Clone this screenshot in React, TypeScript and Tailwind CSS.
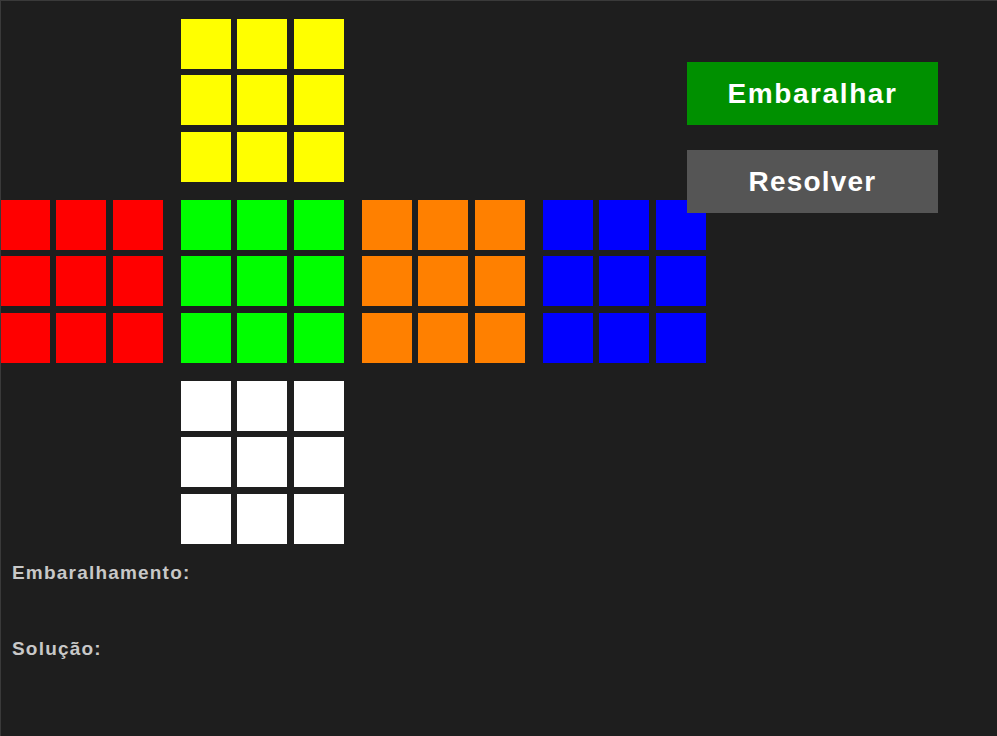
import React from "react";

const faces: { color: string; pos: string }[] = [
  { color: "bg-[#ffff00]", pos: "col-start-2 row-start-1" },
  { color: "bg-[#ff0000]", pos: "col-start-1 row-start-2" },
  { color: "bg-[#00ff00]", pos: "col-start-2 row-start-2" },
  { color: "bg-[#ff8000]", pos: "col-start-3 row-start-2" },
  { color: "bg-[#0000ff]", pos: "col-start-4 row-start-2" },
  { color: "bg-[#ffffff]", pos: "col-start-2 row-start-3" },
];

function Face({ color, pos }: { color: string; pos: string }) {
  return (
    <div className={`grid grid-cols-[repeat(3,50px)] grid-rows-[repeat(3,50px)] gap-[6.3px] ${pos}`}>
      {Array.from({ length: 9 }).map((_, i) => (
        <div key={i} className={color} />
      ))}
    </div>
  );
}

export default function App() {
  return (
    <div
      className="relative w-[997px] h-[736px] overflow-hidden bg-[#1e1e1e] border-t border-l border-[#3a3a3a]"
      style={{ fontFamily: '"Liberation Sans", Arial, sans-serif' }}
    >
      {/* Cube net */}
      <div className="grid grid-cols-[repeat(4,163px)] grid-rows-[repeat(3,163px)] gap-[18px] pt-[18px] -ml-px">
        {faces.map((f, i) => (
          <Face key={i} color={f.color} pos={f.pos} />
        ))}
      </div>

      {/* Move lists */}
      <div className="flex flex-col pl-[11px] pt-[19px] text-[19px] font-bold tracking-[1.2px] text-[#c8c8c8] leading-none">
        <p>Embaralhamento:</p>
        <p className="mt-[57px]">Solução:</p>
      </div>

      {/* Controls */}
      <div className="absolute left-[686px] top-[61px] flex flex-col gap-[25px]">
        <button className="w-[251px] h-[63px] bg-[#009000] text-white text-[28px] font-bold tracking-[1.6px]">
          Embaralhar
        </button>
        <button className="w-[251px] h-[63px] bg-[#555555] text-white text-[28px] font-bold tracking-[1.2px]">
          Resolver
        </button>
      </div>
    </div>
  );
}
